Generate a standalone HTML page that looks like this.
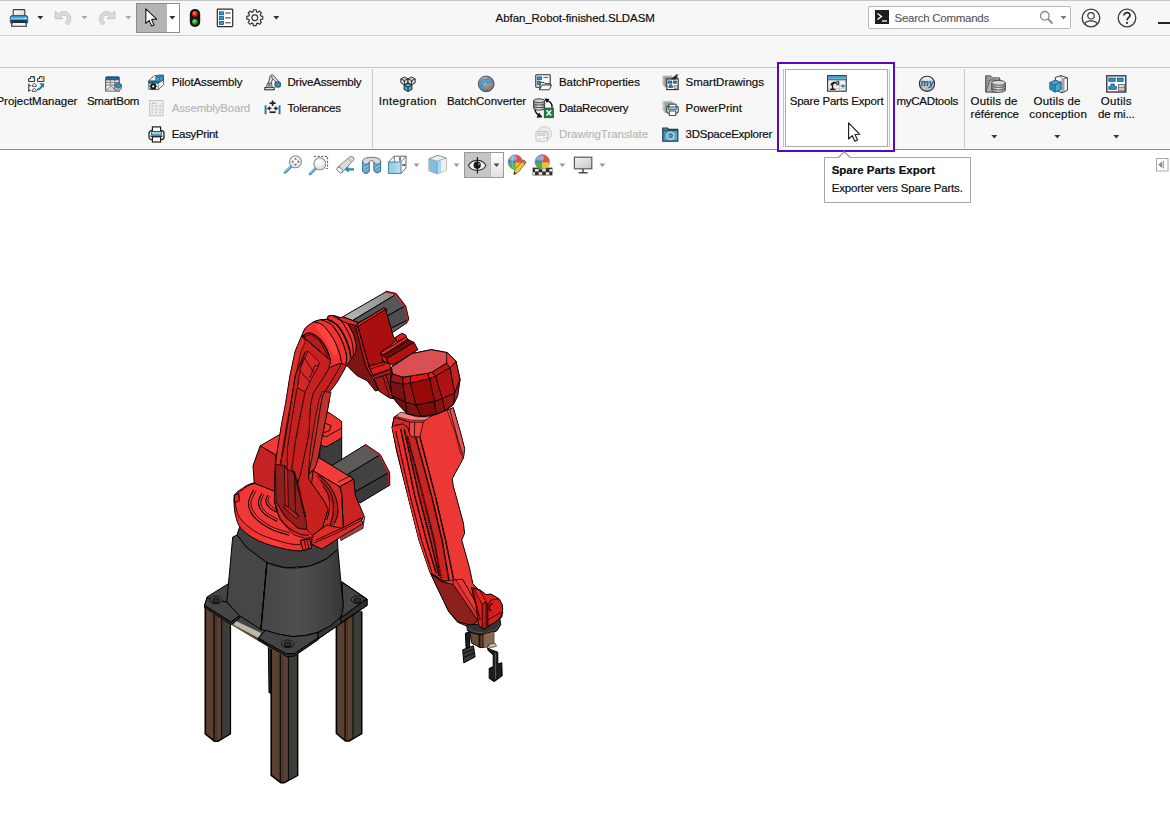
<!DOCTYPE html>
<html><head><meta charset="utf-8"><title>SW</title>
<style>
html,body{margin:0;padding:0;}
body{width:1170px;height:822px;overflow:hidden;background:#fff;font-family:"Liberation Sans",sans-serif;font-size:12px;color:#1a1a1a;position:relative;}
.abs{position:absolute;}
#top{left:0;top:0;width:1170px;height:149px;background:#f7f7f7;}
.hl{position:absolute;left:0;width:1170px;height:1px;}
.t{position:absolute;white-space:nowrap;line-height:14px;height:14px;font-size:11.5px;color:#0c0c0c;-webkit-text-stroke:0.18px #0c0c0c;}

.t.c{text-align:center;}
.vsep{position:absolute;width:1px;background:#c9c9c9;}
svg{position:absolute;overflow:visible;}
</style></head><body>
<div id="top" class="abs"></div>
<div class="hl" style="top:0;background:#c6c6c6;height:1px"></div>
<div class="hl" style="top:35px;background:#cfcfcf"></div>
<div class="hl" style="top:67px;background:#c4c4c4"></div>
<div class="hl" style="top:149px;background:#8c8c8c"></div>

<!--ROBOT--><svg id="robot" width="1170" height="822" viewBox="0 0 1170 822" style="left:0;top:0">
<defs>

<linearGradient id="gped" x1="0" x2="1" y1="0" y2="0"><stop offset="0" stop-color="#464646"/><stop offset="0.45" stop-color="#4f4f4f"/><stop offset="0.85" stop-color="#404040"/><stop offset="1" stop-color="#353535"/></linearGradient>
<linearGradient id="gdisc" x1="0" x2="1" y1="0" y2="0"><stop offset="0" stop-color="#e42a28"/><stop offset="0.45" stop-color="#ff3c3a"/><stop offset="0.6" stop-color="#f43432"/><stop offset="1" stop-color="#e22826"/></linearGradient>
<linearGradient id="gtur" x1="0" x2="1" y1="0" y2="1"><stop offset="0" stop-color="#e02a28"/><stop offset="0.5" stop-color="#fa3a38"/><stop offset="1" stop-color="#d82424"/></linearGradient>
<linearGradient id="gmot" x1="0" x2="1" y1="1" y2="0"><stop offset="0" stop-color="#b8b8b8"/><stop offset="1" stop-color="#8c8c8c"/></linearGradient>
</defs>
<path d="M268.3 643.2 L272.1 643.2 L272.1 693.6 L269.0 692.7 Z" fill="#2e2e2e" stroke="#000" stroke-width="1.0" stroke-linejoin="round" />
<path d="M205.3 604.0 L230.3 604.0 L230.3 733.9 L217.8 741.2 L214.3 741.2 L205.3 733.9 Z" fill="#5a4030" stroke="#000" stroke-width="1.6" stroke-linejoin="round" />
<path d="M221.7 604.0 L229.7 604.0 L229.7 733.6 L221.7 738.4 Z" fill="#3c3c3a" stroke="none" stroke-width="0" stroke-linejoin="round" />
<path d="M215.3 604.0 L216.8 604.0 L216.8 740.4 L215.3 740.4 Z" fill="#48332a" stroke="none" stroke-width="0" stroke-linejoin="round" />
<path d="M214.0 604.0 L214.0 740.0" fill="none" stroke="#0c0806" stroke-width="1.3" stroke-linejoin="round" />
<path d="M221.7 604.0 L221.7 738.4" fill="none" stroke="#0c0c0c" stroke-width="1.125" stroke-linejoin="round" />
<path d="M336.4 612.0 L361.7 612.0 L361.7 733.5 L349.0 741.0 L345.5 741.0 L336.4 733.5 Z" fill="#5a4030" stroke="#000" stroke-width="1.6" stroke-linejoin="round" />
<path d="M353.0 612.0 L361.1 612.0 L361.1 733.2 L353.0 738.1 Z" fill="#3c3c3a" stroke="none" stroke-width="0" stroke-linejoin="round" />
<path d="M346.5 612.0 L348.0 612.0 L348.0 740.2 L346.5 740.2 Z" fill="#48332a" stroke="none" stroke-width="0" stroke-linejoin="round" />
<path d="M345.1 612.0 L345.1 739.8" fill="none" stroke="#0c0806" stroke-width="1.3" stroke-linejoin="round" />
<path d="M353.0 612.0 L353.0 738.1" fill="none" stroke="#0c0c0c" stroke-width="1.125" stroke-linejoin="round" />
<path d="M271.2 648.0 L297.6 648.0 L297.6 775.4 L284.4 782.6 L280.7 782.6 L271.2 775.4 Z" fill="#5a4030" stroke="#000" stroke-width="1.6" stroke-linejoin="round" />
<path d="M288.5 648.0 L297.0 648.0 L297.0 775.1 L288.5 779.9 Z" fill="#3c3c3a" stroke="none" stroke-width="0" stroke-linejoin="round" />
<path d="M281.8 648.0 L283.3 648.0 L283.3 781.8 L281.8 781.8 Z" fill="#48332a" stroke="none" stroke-width="0" stroke-linejoin="round" />
<path d="M280.3 648.0 L280.3 781.4" fill="none" stroke="#0c0806" stroke-width="1.3" stroke-linejoin="round" />
<path d="M288.5 648.0 L288.5 779.9" fill="none" stroke="#0c0c0c" stroke-width="1.125" stroke-linejoin="round" />
<path d="M204.5 606.3 L207.1 596.9 L228.5 583.6 L342.1 581.9 L366.9 599.0 L366.9 605.5 L293.4 655.9 L286.6 656.8 Z" fill="#444444" stroke="#000" stroke-width="1.0" stroke-linejoin="round" />
<path d="M366.9 599.0 L366.9 605.5 L293.4 655.9 L292.6 650.8 Z" fill="#353535" stroke="#000" stroke-width="1.0" stroke-linejoin="round" />
<path d="M204.5 604.6 L204.5 607.5 L287.1 657.3 L288.3 653.3 Z" fill="#6a4a36" stroke="#000" stroke-width="1.0" stroke-linejoin="round" />
<path d="M204.7 607.7 L287.1 657.4" fill="none" stroke="#6a4a36" stroke-width="1.8" stroke-linejoin="round" />
<path d="M235.8 620.5 L261.5 632.8 L258.4 638.3 L233.1 625.1 Z" fill="#bdb9aa" stroke="#333" stroke-width="0.6" stroke-linejoin="round" />
<path d="M207.1 597.8 L226.8 602.1 L239.9 615.4 L231.0 622.1 L204.5 605.5 Z" fill="#454545" stroke="#000" stroke-width="1.0" stroke-linejoin="round" />
<path d="M204.5 605.5 L231.0 622.1 L239.9 615.4 L239.9 617.8 L231.0 624.6 L204.5 607.5 Z" fill="#2f2f2f" stroke="#000" stroke-width="1.0" stroke-linejoin="round" />
<path d="M342.1 582.4 L366.9 599.0 L343.8 615.7 L340.4 617.4 L343.0 605.5 Z" fill="#454545" stroke="#000" stroke-width="1.0" stroke-linejoin="round" />
<path d="M366.9 599.0 L366.9 605.5 L341.3 622.6 L340.4 617.4 L343.8 615.7 Z" fill="#2f2f2f" stroke="#000" stroke-width="1.0" stroke-linejoin="round" />
<ellipse cx="216.0" cy="600.0" rx="6.3" ry="3.8" fill="#555" stroke="#000" stroke-width="0.8"/>
<ellipse cx="216.0" cy="600.5" rx="4" ry="2.4" fill="#2b2b2b" stroke="#000" stroke-width="0.7"/>
<ellipse cx="357.5" cy="599.7" rx="6.3" ry="3.8" fill="#555" stroke="#000" stroke-width="0.8"/>
<ellipse cx="357.5" cy="600.2" rx="4" ry="2.4" fill="#2b2b2b" stroke="#000" stroke-width="0.7"/>
<path d="M237.0 535.0 L246.4 547.4 L266.9 562.7 L285.7 567.9 L309.7 566.2 L326.8 558.5 L337.9 549.1 L337.0 526.8 L309.7 533.7 L299.4 535.4 L266.9 530.3 L241.3 521.7 Z" fill="#3f3f3f" stroke="#000" stroke-width="1.0" stroke-linejoin="round" />
<path d="M232.7 537.1 L237.0 535.0 L246.4 547.4 L266.9 562.7 L260.9 629.4 L239.6 615.7 L226.8 602.1 Z" fill="#474545" stroke="#000" stroke-width="1.0" stroke-linejoin="round" />
<path d="M266.9 562.7 L275.5 565.8 L285.7 567.9 L297.7 567.9 L309.7 566.2 L319.9 562.4 L326.8 558.5 L333.6 553.3 L337.9 549.1 L340.4 576.4 L343.3 605.5 L342.5 612.3 L340.4 617.4 L330.2 626.0 L316.5 632.8 L304.5 635.6 L292.6 636.6 L275.5 633.7 L260.9 629.4 Z" fill="url(#gped)" stroke="#000" stroke-width="1.0" stroke-linejoin="round" />
<path d="M266.9 562.7 L260.9 629.4 Z" fill="none" stroke="#000" stroke-width="1.0" stroke-linejoin="round" />
<path d="M258.4 638.3 L265.2 630.3 L278.9 634.2 L292.6 636.6 L306.2 635.4 L317.4 632.5 L318.2 637.9 L294.6 653.7 L285.7 653.7 Z" fill="#434343" stroke="#000" stroke-width="1.0" stroke-linejoin="round" />
<path d="M258.4 638.3 L285.7 653.7 L294.6 653.7 L318.2 637.9 L318.2 639.7 L294.6 655.9 L286.6 656.8 L258.0 639.7 Z" fill="#2f2f2f" stroke="#000" stroke-width="1.0" stroke-linejoin="round" />
<ellipse cx="287.8" cy="643.9" rx="6.3" ry="3.8" fill="#555" stroke="#000" stroke-width="0.8"/>
<ellipse cx="287.8" cy="644.4" rx="4" ry="2.4" fill="#2b2b2b" stroke="#000" stroke-width="0.7"/>
<path d="M319.7 443.6 L341.7 436.8 L341.7 459.0 L334.2 468.0 L319.7 459.8 Z" fill="#3c3c3c" stroke="#000" stroke-width="1.0" stroke-linejoin="round" />
<path d="M315.7 410.3 L329.4 412.8 L341.7 421.4 L341.7 437.9 L326.0 447.0 L319.7 444.8 L312.3 434.2 Z" fill="#f23634" stroke="#000" stroke-width="1.0" stroke-linejoin="round" />
<path d="M319.7 444.8 L320.5 434.2 L326.0 436.8 L341.7 428.2" fill="none" stroke="#000" stroke-width="0.875" stroke-linejoin="round" />
<path d="M322.6 422.2 L331.1 425.6 L329.4 430.8 L324.3 432.5 L322.6 427.4" fill="none" stroke="#000" stroke-width="0.875" stroke-linejoin="round" />
<path d="M329.4 467.0 L365.3 444.8 L379.8 455.0 L344.8 476.1 Z" fill="#5d5b58" stroke="#000" stroke-width="1.0" stroke-linejoin="round" />
<path d="M344.8 476.1 L379.8 455.0 L388.9 472.6 L354.2 492.3 Z" fill="#424242" stroke="#000" stroke-width="1.0" stroke-linejoin="round" />
<path d="M354.2 492.3 L388.9 472.6 L389.2 485.5 L360.2 502.9 L354.2 500.9 Z" fill="#3a3a3a" stroke="#000" stroke-width="1.0" stroke-linejoin="round" />
<path d="M365.3 444.8 L379.8 455.0 L388.9 472.6 L389.2 485.5" fill="none" stroke="#e02020" stroke-width="1.6" stroke-linejoin="round" />
<path d="M365.0 444.1 L380.3 454.4 L389.7 472.6 L389.9 485.8" fill="none" stroke="#000" stroke-width="0.75" stroke-linejoin="round" />
<path d="M234.8 495.0 C236.0 492.5 238.2 491.1 241.3 489.1 C244.4 487.1 247.0 484.5 253.2 483.1 C259.5 481.7 269.5 478.7 278.9 480.5 C288.3 482.4 302.8 488.2 309.7 494.2 C316.5 500.2 318.8 508.7 319.9 516.4 C321.1 524.1 318.2 535.4 316.5 540.3 C314.8 545.3 312.2 544.6 309.7 546.3 C307.1 548.1 305.7 550.6 301.1 550.9 C296.6 551.3 289.4 550.1 282.3 548.4 C275.2 546.7 265.2 544.0 258.4 540.7 C251.5 537.4 245.0 532.8 241.3 528.7 C237.5 524.7 237.0 520.5 235.8 516.4 C234.6 512.4 234.3 508.0 234.1 504.4 C233.9 500.9 233.6 497.6 234.8 495.0 Z" fill="url(#gdisc)" stroke="#000" stroke-width="1.0" stroke-linejoin="round"/>
<path d="M235.8 496.8 C236.8 494.4 238.4 492.9 241.3 490.8 C244.2 488.6 247.0 485.5 253.2 483.9 C259.5 482.4 269.8 479.7 278.9 481.4 C288.0 483.1 301.5 488.3 307.9 494.2 C314.4 500.0 316.5 509.6 317.4 516.4 C318.2 523.2 316.1 530.5 313.1 535.2 C310.1 539.9 305.7 543.6 299.4 544.4 C293.1 545.2 282.9 542.2 275.5 540.0 C268.1 537.8 260.9 535.2 255.0 531.5 C249.0 527.7 243.2 522.2 239.9 517.8 C236.7 513.3 236.2 508.3 235.5 504.8 C234.8 501.3 234.8 499.1 235.8 496.8 Z" fill="#f23836" stroke="#000" stroke-width="0.8" stroke-linejoin="round"/>
<path d="M234.1 495.0 L238.7 493.8 L239.6 500.7 L234.8 502.4 Z" fill="#e22826" stroke="#000" stroke-width="1.0" stroke-linejoin="round" />
<path d="M253.6 489.9 C252.7 492.1 248.5 498.3 248.5 502.7 C248.5 507.2 249.9 512.1 253.6 516.4 C257.2 520.7 264.4 525.6 270.3 528.7 C276.3 531.9 286.0 534.1 289.1 535.2" fill="none" stroke="#000" stroke-width="1.125" stroke-linejoin="round"/>
<path d="M256.0 490.8 C255.2 492.8 251.0 498.7 251.0 502.7 C251.0 506.8 252.5 511.1 256.0 515.0 C259.4 519.0 266.0 523.7 271.7 526.7 C277.4 529.6 287.0 531.8 290.0 532.8" fill="none" stroke="#000" stroke-width="0.75" stroke-linejoin="round"/>
<path d="M261.8 493.3 C261.2 495.0 258.0 499.7 258.4 503.1 C258.7 506.4 260.7 510.3 263.8 513.3 C267.0 516.4 275.0 520.2 277.2 521.5" fill="none" stroke="#000" stroke-width="1.125" stroke-linejoin="round"/>
<path d="M264.0 494.2 C263.5 495.7 260.5 500.1 260.8 503.1 C261.1 506.0 263.0 509.2 265.9 512.0 C268.8 514.7 276.2 518.2 278.2 519.5" fill="none" stroke="#000" stroke-width="0.75" stroke-linejoin="round"/>
<path d="M267.8 495.0 C267.4 496.1 265.4 499.2 265.7 501.4 C266.1 503.6 268.2 506.4 270.0 508.2 C271.8 510.0 275.3 511.5 276.3 512.1" fill="none" stroke="#000" stroke-width="1.125" stroke-linejoin="round"/>
<path d="M269.7 495.9 C269.4 496.8 267.6 499.3 267.9 501.0 C268.3 502.8 270.2 505.0 271.7 506.5 C273.2 508.0 276.0 509.3 276.8 509.9" fill="none" stroke="#000" stroke-width="0.75" stroke-linejoin="round"/>
<path d="M260.2 445.8 L279.5 434.7 L280.2 453.0 L275.6 455.0 Z" fill="#f03a38" stroke="#000" stroke-width="1.0" stroke-linejoin="round" />
<path d="M260.2 445.8 L275.6 455.0 L275.0 491.5 L254.2 483.2 L253.0 465.8 Z" fill="#c52222" stroke="#000" stroke-width="1.0" stroke-linejoin="round" />
<path d="M305.5 465.0 L318.3 457.3 L339.7 486.8 L329.4 538.8 L305.5 519.7 Z" fill="#d82a28" stroke="none" stroke-width="0" stroke-linejoin="round" />
<path d="M318.3 457.3 L353.7 479.0 L339.7 486.8 L313.2 470.9 Z" fill="#f43c3a" stroke="#000" stroke-width="1.0" stroke-linejoin="round" />
<path d="M339.7 486.8 L353.7 479.0 L355.4 495.7 L363.9 515.4 L362.2 519.7 L343.4 532.0 L341.7 494.0 Z" fill="#c92323" stroke="#000" stroke-width="1.0" stroke-linejoin="round" />
<path d="M313.2 470.9 L339.7 486.8 L341.7 494.0 L343.4 532.0 L329.4 538.8 L315.7 535.0 L308.9 502.6 Z" fill="#d82a28" stroke="#000" stroke-width="1.0" stroke-linejoin="round" />
<path d="M337.9 482.1 L351.6 475.2" fill="none" stroke="#000" stroke-width="0.75" stroke-linejoin="round" />
<path d="M315.7 475.2 C316.3 474.4 322.8 476.9 326.0 480.3 C329.2 483.8 332.9 490.3 334.9 495.7 C336.9 501.1 338.1 508.0 337.9 512.8 C337.8 517.7 335.9 521.9 334.2 524.8 C332.5 527.6 328.1 531.9 327.7 529.9 C327.3 527.9 331.7 518.2 332.0 512.8 C332.3 507.4 331.0 502.0 329.4 497.4 C327.8 492.9 324.8 489.2 322.6 485.5 C320.3 481.8 315.2 476.1 315.7 475.2 Z" fill="#b81c1a" stroke="none" stroke-width="0" stroke-linejoin="round"/>
<path d="M318.3 475.2 C320.1 476.9 326.4 481.5 329.4 485.5 C332.4 489.5 334.8 494.6 336.2 499.1 C337.7 503.7 338.2 508.8 337.9 512.8 C337.7 516.8 335.1 521.4 334.5 523.1" fill="none" stroke="#000" stroke-width="1.0" stroke-linejoin="round"/>
<path d="M320.9 480.3 C322.3 482.1 327.4 486.9 329.4 490.6 C331.5 494.3 332.6 498.3 333.2 502.6 C333.7 506.8 333.4 512.3 332.8 516.2 C332.2 520.2 330.0 524.8 329.4 526.5" fill="none" stroke="#000" stroke-width="1.0" stroke-linejoin="round"/>
<path d="M322.6 485.5 C323.6 487.2 327.4 491.7 328.5 495.7 C329.7 499.7 329.7 505.4 329.4 509.4 C329.1 513.4 327.3 517.9 326.8 519.7" fill="none" stroke="#000" stroke-width="1.0" stroke-linejoin="round"/>
<path d="M312.2 535.2 L326.8 525.0 L342.1 528.4 L360.9 518.1 L363.0 523.6 L340.4 537.3 L321.6 549.2 L311.7 544.1 Z" fill="#e42a28" stroke="#000" stroke-width="1.0" stroke-linejoin="round" />
<path d="M315.6 540.3 L334.4 531.5 L342.1 528.4" fill="none" stroke="#000" stroke-width="0.875" stroke-linejoin="round" />
<path d="M313.9 542.9 L335.3 533.8 L361.8 520.2" fill="none" stroke="#000" stroke-width="0.75" stroke-linejoin="round" />
<path d="M340.4 537.3 L363.0 523.6 L364.7 516.4 L363.0 528.4 L340.8 540.7 Z" fill="#9a4444" stroke="#000" stroke-width="0.6" stroke-linejoin="round" />
<path d="M300.3 540.3 L309.7 539.0 L311.7 548.0 L303.2 550.6 Z" fill="#e22826" stroke="#000" stroke-width="1.0" stroke-linejoin="round" />
<path d="M304.2 540.0 L306.2 549.2" fill="none" stroke="#000" stroke-width="0.75" stroke-linejoin="round" />
<path d="M306.9 539.7 L309.0 548.9" fill="none" stroke="#000" stroke-width="0.75" stroke-linejoin="round" />
<path d="M301.7 335.9 L295.2 351.3 L290.1 375.2 L285.8 402.6 L281.5 424.8 L277.3 451.3 L275.6 465.0 L274.7 480.3 L274.4 500.9 L277.3 512.8 L283.2 523.1 L293.5 532.5 L303.8 537.6 L313.2 535.0 L322.6 527.4 L328.0 509.4 L325.1 502.6 L315.7 488.9 L308.9 479.5 L308.5 474.4 L314.9 468.4 L318.3 457.3 L322.6 434.2 L326.8 413.7 L329.4 400.0 L328.2 394.0 L337.4 381.8 L345.6 367.4 L346.7 365.4 L351.8 358.2 L355.4 353.1 L356.4 345.9 L353.8 334.6 L347.7 323.3 L341.5 318.2 L333.3 315.6 L328.2 316.2 L327.2 319.2 L321.0 319.7 L313.8 321.8 L305.6 327.9 Z" fill="#c6211f" stroke="#000" stroke-width="1.0" stroke-linejoin="round" />
<path d="M329.4 400.0 L326.8 413.7 L322.6 434.2 L318.3 457.3 L314.9 468.4 L308.5 473.8 L309.6 456.4 L312.6 434.2 L316.2 413.7 L319.1 400.0 L322.2 391.5 L331.1 392.3 Z" fill="#c2302e" stroke="#000" stroke-width="0.7" stroke-linejoin="round" />
<path d="M301.7 335.9 L295.2 351.3 L290.1 375.2 L285.8 402.6 L281.5 424.8 L277.3 451.3 L275.6 465.0 L274.7 480.3 L274.4 500.9 L277.3 512.8 L281.0 508.0 L279.5 480.0 L282.0 452.0 L286.5 425.0 L291.0 402.0 L295.5 376.0 L300.5 353.0 L305.5 341.0 Z" fill="#e0302e" stroke="#000" stroke-width="0.6" stroke-linejoin="round" />
<path d="M274.1 500.0 L276.0 501.3 L285.0 516.6 L297.8 528.1 L306.7 529.4 L313.7 536.8 L305.4 538.6 L293.9 534.8 L279.9 519.4 Z" fill="#d22826" stroke="#000" stroke-width="0.7" stroke-linejoin="round" />
<path d="M275.4 464.3 L284.3 465.5 L287.5 470.0 L294.6 471.9 L296.5 482.1 L306.1 521.7 L307.0 529.4 L297.8 528.1 L285.0 516.6 L276.0 501.3 Z" fill="#8e1f1c" stroke="#000" stroke-width="0.8" stroke-linejoin="round" />
<path d="M284.3 465.5 L287.5 470.0 L288.4 507.0 L285.2 505.4 Z" fill="#c4201e" stroke="#000" stroke-width="0.7" stroke-linejoin="round" />
<path d="M288.4 507.0 L285.2 505.4 L283.5 507.0 L296.2 518.9 L299.0 516.4 Z" fill="#b81e1c" stroke="#000" stroke-width="0.7" stroke-linejoin="round" />
<path d="M294.6 471.9 L295.5 511.5 L299.0 516.4" fill="none" stroke="#000" stroke-width="0.875" stroke-linejoin="round" />
<path d="M305.1 352.1 L295.2 375.2 L288.4 419.7 L283.2 451.3 L280.2 463.6" fill="none" stroke="#000" stroke-width="0.875" stroke-linejoin="round" />
<path d="M319.5 362.8 L306.3 385.5 L299.5 419.7 L295.2 442.7 L291.8 468.4 L297.8 482.1 L302.1 502.6 L305.8 517.1" fill="none" stroke="#000" stroke-width="1.4" stroke-linejoin="round" stroke-dasharray="1.2 0.7"/>
<path d="M310.8 379.7 L296.9 388.9 L291.8 419.7 L287.5 447.9 L287.0 470.1" fill="none" stroke="#000" stroke-width="0.75" stroke-linejoin="round" />
<path d="M329.2 367.4 L324.1 376.7 L313.2 393.2 L310.6 404.3 L308.9 434.2 L300.3 475.2 L297.8 482.1" fill="none" stroke="#000" stroke-width="0.875" stroke-linejoin="round" />
<path d="M341.5 363.3 L337.4 371.5 L322.6 395.7 L320.0 409.4 L318.3 420.5 L312.3 456.4 L308.9 471.8 L308.5 476.9" fill="none" stroke="#000" stroke-width="0.875" stroke-linejoin="round" />
<path d="M275.0 502.6 C275.7 504.8 276.8 512.1 279.0 516.2 C281.2 520.4 284.8 524.4 288.4 527.4 C291.9 530.3 296.9 532.9 300.3 534.2 C303.8 535.5 307.5 534.9 308.9 535.0" fill="none" stroke="#000" stroke-width="0.875" stroke-linejoin="round"/>
<path d="M302.1 336.2 C301.7 335.3 303.7 330.3 305.6 327.9 C307.6 325.6 311.3 323.2 313.8 321.8 C316.4 320.4 318.8 320.2 321.0 319.7 C323.2 319.3 326.0 319.8 327.2 319.2 C328.4 318.6 327.2 316.8 328.2 316.2 C329.2 315.6 331.1 315.3 333.3 315.6 C335.6 316.0 339.1 316.9 341.5 318.2 C343.9 319.5 345.6 320.6 347.7 323.3 C349.7 326.1 352.4 330.9 353.8 334.6 C355.3 338.4 356.2 342.8 356.4 345.9 C356.7 349.0 356.2 351.0 355.4 353.1 C354.6 355.1 353.2 356.2 351.8 358.2 C350.3 360.3 348.4 364.5 346.7 365.4 C345.0 366.2 343.8 363.2 341.5 363.3 C339.3 363.4 335.4 365.2 333.3 365.9 C331.3 366.6 329.7 368.2 329.2 367.4 C328.7 366.7 330.4 363.7 330.3 361.3 C330.1 358.9 329.4 356.0 328.2 353.1 C327.0 350.2 325.3 346.8 323.1 343.8 C320.9 340.9 317.4 337.4 314.9 335.6 C312.3 333.8 309.8 333.0 307.7 333.1 C305.6 333.2 302.4 337.0 302.1 336.2 Z" fill="#f03230" stroke="#000" stroke-width="1.0" stroke-linejoin="round"/>
<path d="M315.9 326.4 C315.6 324.0 320.5 323.8 323.1 325.4 C325.6 326.9 329.1 331.7 331.3 335.6 C333.5 339.6 335.5 345.6 336.4 349.0 C337.3 352.4 337.5 355.8 336.6 356.2 C335.8 356.5 333.2 353.8 331.3 351.0 C329.4 348.3 327.7 343.8 325.1 339.7 C322.6 335.6 316.2 328.8 315.9 326.4 Z" fill="#fb4644" stroke="none" stroke-width="0" stroke-linejoin="round"/>
<path d="M313.8 321.8 C315.4 322.4 319.8 322.6 323.1 325.4 C326.3 328.2 330.6 334.1 333.3 338.7 C336.1 343.3 338.1 349.0 339.5 353.1 C340.9 357.2 341.2 361.6 341.5 363.3" fill="none" stroke="#000" stroke-width="1.0" stroke-linejoin="round"/>
<path d="M321.0 319.7 C322.7 320.5 328.0 321.4 331.3 324.4 C334.5 327.4 338.1 333.2 340.5 337.7 C342.9 342.1 344.6 347.4 345.6 351.0 C346.7 354.6 346.7 357.0 346.7 359.2 C346.7 361.5 345.8 363.5 345.6 364.4" fill="none" stroke="#000" stroke-width="1.125" stroke-linejoin="round"/>
<path d="M327.2 319.2 C328.9 320.3 334.4 322.1 337.4 325.4 C340.5 328.6 343.6 334.4 345.6 338.7 C347.7 343.0 348.9 347.8 349.7 351.0 C350.6 354.3 350.6 357.0 350.8 358.2" fill="none" stroke="#000" stroke-width="1.6" stroke-linejoin="round"/>
<path d="M333.3 316.2 C334.7 317.0 338.8 318.0 341.5 321.3 C344.3 324.5 347.9 331.5 349.7 335.6 C351.6 339.7 352.2 342.6 352.8 345.9 C353.4 349.1 353.2 353.6 353.3 355.1" fill="none" stroke="#000" stroke-width="1.0" stroke-linejoin="round"/>
<path d="M303.4 336.9 L310.8 334.4 L319.5 340.8 L325.6 351.0 L328.4 359.2 L326.2 356.7 Z" fill="#b51c1a" stroke="#000" stroke-width="0.7" stroke-linejoin="round" />
<path d="M302.1 336.9 C303.3 336.2 306.8 332.5 309.7 332.8 C312.6 333.0 316.7 335.5 319.5 338.2 C322.3 340.9 324.8 345.3 326.7 349.0 C328.5 352.6 329.8 358.4 330.5 360.3" fill="none" stroke="#000" stroke-width="0.875" stroke-linejoin="round"/>
<path d="M303.4 337.2 L326.2 356.7" fill="none" stroke="#000" stroke-width="1.0" stroke-linejoin="round" />
<path d="M305.1 352.1 L308.2 351.3 L319.5 362.3 L318.2 366.2 L310.8 379.7 L305.1 392.1 L297.4 387.9 L300.5 367.4 Z" fill="#d42826" stroke="#000" stroke-width="0.7" stroke-linejoin="round" />
<path d="M308.2 351.3 L304.6 358.2 L300.5 367.4" fill="none" stroke="#000" stroke-width="0.75" stroke-linejoin="round" />
<path d="M304.6 358.2 L313.8 372.6" fill="none" stroke="#000" stroke-width="0.75" stroke-linejoin="round" />
<path d="M299.5 370.5 L309.7 381.8" fill="none" stroke="#000" stroke-width="0.75" stroke-linejoin="round" />
<path d="M318.2 366.2 L314.9 365.4 L309.7 377.7" fill="none" stroke="#000" stroke-width="1.2" stroke-linejoin="round" stroke-dasharray="1.2 0.7"/>
<path d="M342.8 316.8 L386.0 291.7 L395.8 294.0 L393.2 296.1 L352.6 320.5 Z" fill="url(#gmot)" stroke="#000" stroke-width="1.0" stroke-linejoin="round" />
<path d="M352.6 320.5 L393.2 296.1 L395.8 294.0 L405.2 306.4 L402.6 307.4 L386.4 316.5 L381.3 310.6 L358.2 322.6 Z" fill="#575757" stroke="#000" stroke-width="1.0" stroke-linejoin="round" />
<path d="M386.4 316.5 L402.6 307.4 L405.2 306.4 L408.2 319.2 L406.5 320.5 L389.0 329.4 Z" fill="#4d4d4d" stroke="#000" stroke-width="1.0" stroke-linejoin="round" />
<path d="M389.0 329.4 L406.5 320.5 L408.2 319.2 L405.2 323.9 L393.7 331.8 L389.8 333.7 Z" fill="#5e5e5e" stroke="#000" stroke-width="1.0" stroke-linejoin="round" />
<path d="M386.0 291.7 L395.8 294.0 L405.2 306.4 L408.2 319.2 L405.4 323.9" fill="none" stroke="#e02020" stroke-width="1.8" stroke-linejoin="round" />
<path d="M385.6 291.2 L396.2 293.5 L405.8 306.1 L408.8 319.2 L405.7 324.3" fill="none" stroke="#000" stroke-width="0.75" stroke-linejoin="round" />
<path d="M341.5 318.2 L345.6 321.3 L358.5 323.8 L369.2 370.5 L372.3 376.7 L378.5 390.0 L375.4 391.0 L367.2 380.8 L356.9 375.6 L346.7 365.4 L351.8 358.2 L355.4 353.1 L356.4 345.9 L353.8 334.6 L347.7 323.3 Z" fill="#7e1515" stroke="#000" stroke-width="1.0" stroke-linejoin="round" />
<path d="M337.7 318.8 L342.8 316.8 L352.6 320.5 L358.2 322.6 L357.2 324.1 L356.5 325.9 L345.4 322.6 Z" fill="#e22a28" stroke="#000" stroke-width="1.0" stroke-linejoin="round" />
<path d="M356.5 325.9 L358.6 327.1 L387.1 310.0 L385.6 308.2 L383.7 307.9 L357.2 323.9 Z" fill="#ee1e1c" stroke="#000" stroke-width="1.0" stroke-linejoin="round" />
<path d="M357.8 326.5 L385.6 309.4 L393.7 337.3 L397.9 340.2 L380.9 352.1 L383.4 362.1 L368.9 366.3 Z" fill="#aa0f0f" stroke="#000" stroke-width="1.0" stroke-linejoin="round" />
<path d="M355.2 325.8 L357.8 326.5 L368.9 366.3 L373.2 375.7 L370.6 375.7 L365.5 365.5 Z" fill="#cc1414" stroke="#000" stroke-width="1.0" stroke-linejoin="round" />
<path d="M368.9 366.3 L383.4 362.1 L389.4 363.8 L391.1 368.9 L375.7 374.0 L373.2 375.7 Z" fill="#e01a18" stroke="#000" stroke-width="1.0" stroke-linejoin="round" />
<path d="M370.6 368.9 L385.1 364.1" fill="none" stroke="#000" stroke-width="0.75" stroke-linejoin="round" />
<path d="M394.6 337.9 L401.8 333.3 L405.6 334.9 L406.7 337.4 L397.4 341.5 Z" fill="#e81a18" stroke="#000" stroke-width="1.0" stroke-linejoin="round" />
<path d="M380.4 352.5 L406.1 337.1 L408.1 339.3 L382.6 355.4 Z" fill="#f21a18" stroke="#000" stroke-width="1.0" stroke-linejoin="round" />
<path d="M382.6 355.4 L408.1 339.3 L414.0 342.3 L386.4 358.7 Z" fill="#4a0606" stroke="#000" stroke-width="0.6" stroke-linejoin="round" />
<path d="M384.0 356.1 L386.4 358.0" fill="none" stroke="#d01412" stroke-width="0.875" stroke-linejoin="round" />
<path d="M385.9 354.9 L388.3 356.9" fill="none" stroke="#d01412" stroke-width="0.875" stroke-linejoin="round" />
<path d="M387.9 353.7 L390.3 355.7" fill="none" stroke="#d01412" stroke-width="0.875" stroke-linejoin="round" />
<path d="M389.8 352.6 L392.2 354.6" fill="none" stroke="#d01412" stroke-width="0.875" stroke-linejoin="round" />
<path d="M391.7 351.4 L394.1 353.4" fill="none" stroke="#d01412" stroke-width="0.875" stroke-linejoin="round" />
<path d="M393.6 350.3 L396.0 352.2" fill="none" stroke="#d01412" stroke-width="0.875" stroke-linejoin="round" />
<path d="M395.5 349.1 L397.9 351.1" fill="none" stroke="#d01412" stroke-width="0.875" stroke-linejoin="round" />
<path d="M397.4 347.9 L399.8 349.9" fill="none" stroke="#d01412" stroke-width="0.875" stroke-linejoin="round" />
<path d="M399.4 346.8 L401.8 348.8" fill="none" stroke="#d01412" stroke-width="0.875" stroke-linejoin="round" />
<path d="M401.3 345.6 L403.7 347.6" fill="none" stroke="#d01412" stroke-width="0.875" stroke-linejoin="round" />
<path d="M403.2 344.5 L405.6 346.4" fill="none" stroke="#d01412" stroke-width="0.875" stroke-linejoin="round" />
<path d="M405.1 343.3 L407.5 345.3" fill="none" stroke="#d01412" stroke-width="0.875" stroke-linejoin="round" />
<path d="M407.0 342.1 L409.4 344.1" fill="none" stroke="#d01412" stroke-width="0.875" stroke-linejoin="round" />
<path d="M408.9 341.0 L411.3 342.9" fill="none" stroke="#d01412" stroke-width="0.875" stroke-linejoin="round" />
<path d="M386.4 358.7 L414.0 342.3 L417.9 349.7 L392.5 365.3 L388.1 362.9 Z" fill="#b41010" stroke="#000" stroke-width="1.0" stroke-linejoin="round" />
<path d="M380.4 352.5 L382.6 355.4 L386.4 358.7 L388.1 362.9 L383.1 360.9 Z" fill="#e01a18" stroke="#000" stroke-width="1.0" stroke-linejoin="round" />
<path d="M373.2 375.7 L391.1 368.9 L392.8 382.6 L399.7 399.7 L389.4 397.9 L379.1 391.1 Z" fill="#a41a18" stroke="#000" stroke-width="1.0" stroke-linejoin="round" />
<path d="M375.7 378.3 L389.4 373.7" fill="none" stroke="#000" stroke-width="0.75" stroke-linejoin="round" />
<path d="M382.6 375.7 L389.4 396.2" fill="none" stroke="#000" stroke-width="0.75" stroke-linejoin="round" />
<path d="M386.0 374.9 L392.0 394.5" fill="none" stroke="#000" stroke-width="0.75" stroke-linejoin="round" />
<path d="M401.0 412.8 L394.2 417.1 L392.1 427.4 L396.8 451.3 L407.9 495.7 L419.0 540.0 L430.1 572.5 L435.2 582.7 L448.9 611.8 L457.4 622.1 L469.4 627.2 L479.7 628.9 L495.0 623.8 L501.9 616.9 L502.7 608.4 L500.2 600.7 L491.6 594.7 L483.1 594.7 L472.8 583.6 L469.4 567.4 L461.7 540.0 L464.6 533.3 L463.4 523.1 L453.2 485.5 L452.3 478.6 L463.4 458.1 L464.6 448.7 L460.9 434.2 L453.2 407.7 L428.4 417.1 Z" fill="#ec3834" stroke="#000" stroke-width="1.0" stroke-linejoin="round" />
<path d="M394.2 417.1 L392.1 427.4 L396.8 451.3 L407.9 495.7 L419.0 540.0 L430.1 572.5 L443.8 581.0 L453.2 580.2 L445.5 540.0 L435.2 495.7 L419.8 436.8 L411.3 435.9 L409.6 422.2 Z" fill="#d62a28" stroke="#000" stroke-width="1.0" stroke-linejoin="round" />
<path d="M392.1 427.4 L407.9 495.7 L419.0 540.0 L430.1 572.5 L436.1 573.3 L426.3 540.0 L414.7 495.7 L400.7 429.1 Z" fill="#f62c2c" stroke="none" stroke-width="0" stroke-linejoin="round" />
<path d="M400.7 429.1 L414.7 495.7 L426.3 540.0 L436.1 573.3 L439.0 575.9 L430.4 540.0 L419.0 495.7 L404.1 429.1 Z" fill="#ee2a28" stroke="none" stroke-width="0" stroke-linejoin="round" />
<path d="M404.1 429.1 L419.0 495.7 L430.4 540.0 L439.0 575.9 L442.1 578.5 L435.2 540.0 L424.1 495.7 L408.7 436.8 Z" fill="#c22220" stroke="none" stroke-width="0" stroke-linejoin="round" />
<path d="M408.7 436.8 L424.1 495.7 L435.2 540.0 L442.1 578.5 L448.9 580.2 L442.1 540.0 L431.5 495.7 L415.6 436.8 Z" fill="#ca2422" stroke="none" stroke-width="0" stroke-linejoin="round" />
<path d="M415.6 436.8 L431.5 495.7 L442.1 540.0 L448.9 580.2 L453.7 580.2 L445.5 540.0 L435.2 495.7 L419.8 436.8 Z" fill="#f83030" stroke="none" stroke-width="0" stroke-linejoin="round" />
<path d="M395.6 430.8 L410.1 495.7 L421.5 540.0 L431.8 572.1" fill="none" stroke="#000" stroke-width="1.0" stroke-linejoin="round" />
<path d="M400.7 429.1 L414.7 495.7 L426.3 540.0 L436.1 573.3" fill="none" stroke="#000" stroke-width="1.375" stroke-linejoin="round" />
<path d="M404.1 429.1 L419.0 495.7 L430.4 540.0 L439.0 575.9" fill="none" stroke="#000" stroke-width="1.375" stroke-linejoin="round" />
<path d="M415.6 436.8 L431.5 495.7 L442.1 540.0 L448.9 580.2" fill="none" stroke="#000" stroke-width="1.375" stroke-linejoin="round" />
<path d="M419.8 436.8 L435.2 495.7 L445.5 540.0 L453.7 580.2" fill="none" stroke="#000" stroke-width="1.375" stroke-linejoin="round" />
<path d="M407.5 436.8 L422.9 495.7 L434.0 540.0 L441.0 577.9" fill="none" stroke="#000" stroke-width="1.9" stroke-linejoin="round" stroke-dasharray="1.3 0.7"/>
<path d="M409.6 422.2 L423.2 422.2 L419.8 436.8 L411.3 436.8 L409.2 432.5 Z" fill="#f04442" stroke="#000" stroke-width="0.7" stroke-linejoin="round" />
<path d="M414.7 422.2 L414.4 436.8" fill="none" stroke="#000" stroke-width="0.75" stroke-linejoin="round" />
<path d="M394.2 425.6 L402.7 423.9 L407.9 427.4 L409.2 432.5" fill="none" stroke="#000" stroke-width="0.875" stroke-linejoin="round" />
<path d="M423.2 422.2 L428.4 417.1" fill="none" stroke="#000" stroke-width="0.875" stroke-linejoin="round" />
<path d="M453.2 407.7 L460.9 434.2 L464.6 448.7 L463.4 458.1 L460.0 451.3 L455.7 434.2 L447.2 410.3 Z" fill="#e85250" stroke="#000" stroke-width="0.6" stroke-linejoin="round" />
<path d="M449.7 409.4 L458.8 442.7 L462.6 454.7" fill="none" stroke="#000" stroke-width="0.75" stroke-linejoin="round" />
<path d="M396.8 415.0 L401.0 412.0 L416.4 416.8 L428.4 416.8 L431.8 413.7 L428.4 418.5 L425.0 420.2 L411.3 420.2 L399.3 417.4 Z" fill="#f48686" stroke="#000" stroke-width="0.6" stroke-linejoin="round" />
<path d="M430.9 574.2 L445.5 582.7 L453.2 584.4 L477.9 620.3 L472.0 625.5 L459.1 622.1 L448.9 611.8 L435.2 583.6 Z" fill="#8e201c" stroke="#000" stroke-width="1.0" stroke-linejoin="round" />
<path d="M453.2 580.2 L455.7 579.7 L480.5 619.5 L477.9 620.3 L453.2 584.4 Z" fill="#e23230" stroke="#000" stroke-width="0.6" stroke-linejoin="round" />
<path d="M455.7 579.7 L462.6 579.3 L483.1 615.2" fill="none" stroke="#000" stroke-width="0.875" stroke-linejoin="round" />
<path d="M430.9 574.2 L435.2 576.8 L440.3 581.0 L445.5 582.7" fill="none" stroke="#000" stroke-width="0.875" stroke-linejoin="round" />
<path d="M466.8 624.8 L480.1 624.1 L499.9 618.8 L500.7 624.8 L496.9 630.8 L485.5 635.4 L473.4 633.8 L467.4 630.6 Z" fill="#333333" stroke="#000" stroke-width="1.0" stroke-linejoin="round" />
<path d="M471.4 587.4 L480.1 590.0 L486.2 594.7 L490.8 594.0 L498.9 598.7 L502.2 604.7 L502.6 612.8 L498.9 619.1 L493.5 623.1 L487.9 626.6 L483.5 629.2 L478.8 625.5 L476.1 606.8 Z" fill="#dc201e" stroke="#000" stroke-width="1.0" stroke-linejoin="round" />
<path d="M474.1 588.0 L480.1 590.7 L486.2 602.1 L482.1 604.1 L476.4 594.0 Z" fill="#e82422" stroke="#000" stroke-width="0.7" stroke-linejoin="round" />
<path d="M482.1 604.1 L486.2 602.1 L487.9 604.7 L487.6 626.3 L483.5 629.1 L482.4 626.8 Z" fill="#c41816" stroke="#000" stroke-width="0.8" stroke-linejoin="round" />
<path d="M486.2 602.1 L486.2 626.2" fill="none" stroke="#000" stroke-width="0.75" stroke-linejoin="round" />
<path d="M487.9 604.7 L490.8 600.1 L498.9 598.7 L502.2 604.7 L502.6 612.8 L498.9 619.1 L493.5 623.1 L487.9 626.3 Z" fill="#d81e1c" stroke="#000" stroke-width="0.7" stroke-linejoin="round" />
<path d="M487.9 620.1 L498.9 613.4 L502.6 612.1" fill="none" stroke="#000" stroke-width="0.75" stroke-linejoin="round" />
<path d="M492.4 603.4 C492.0 603.7 490.3 604.5 489.8 605.4 C489.2 606.3 489.0 607.8 489.2 608.8 C489.5 609.7 490.8 610.7 491.1 611.0" fill="none" stroke="#000" stroke-width="1.125" stroke-linejoin="round"/>
<path d="M472.8 589.4 L480.1 620.1" fill="none" stroke="#000" stroke-width="1.5" stroke-linejoin="round" stroke-dasharray="1.2 0.8"/>
<path d="M391.4 367.2 L412.2 353.5 L431.3 349.7 L446.7 352.5 L448.0 353.5 L456.0 361.2 L460.0 379.3 L457.6 395.7 L453.2 405.0 L445.0 410.5 L436.3 414.1 L421.5 416.5 L407.2 413.8 L397.4 403.4 L391.9 395.7 L390.3 381.5 Z" fill="#9c0a0a" stroke="#000" stroke-width="1.0" stroke-linejoin="round" />
<path d="M392.5 373.8 L402.9 377.1 L402.9 384.2 L390.3 381.5 Z" fill="#a81414" stroke="#000" stroke-width="0.8" stroke-linejoin="round" />
<path d="M402.9 377.1 L410.5 376.0 L410.3 383.1 L402.9 384.2 Z" fill="#c41818" stroke="#000" stroke-width="0.8" stroke-linejoin="round" />
<path d="M410.5 376.0 L427.5 373.3 L429.7 378.7 L410.3 383.1 Z" fill="#e81212" stroke="#000" stroke-width="0.8" stroke-linejoin="round" />
<path d="M427.5 373.3 L431.9 372.2 L435.7 376.0 L429.7 378.7 Z" fill="#f41c1c" stroke="#000" stroke-width="0.8" stroke-linejoin="round" />
<path d="M431.9 372.2 L446.7 362.9 L450.0 367.8 L435.7 376.0 Z" fill="#c21212" stroke="#000" stroke-width="0.8" stroke-linejoin="round" />
<path d="M446.7 362.9 L448.0 353.5 L456.0 361.2 L450.0 367.8 Z" fill="#e83434" stroke="#000" stroke-width="0.8" stroke-linejoin="round" />
<path d="M390.3 381.5 L402.9 384.2 L405.6 402.3 L391.9 395.7 Z" fill="#7a1212" stroke="#000" stroke-width="0.8" stroke-linejoin="round" />
<path d="M402.9 384.2 L410.3 383.1 L416.0 405.0 L405.6 402.3 Z" fill="#981414" stroke="#000" stroke-width="0.8" stroke-linejoin="round" />
<path d="M410.3 383.1 L429.7 378.7 L434.6 401.7 L416.0 405.0 Z" fill="#960a0a" stroke="#000" stroke-width="0.8" stroke-linejoin="round" />
<path d="M429.7 378.7 L435.7 376.0 L442.3 398.5 L434.6 401.7 Z" fill="#a01010" stroke="#000" stroke-width="0.8" stroke-linejoin="round" />
<path d="M435.7 376.0 L450.0 367.8 L454.9 393.0 L442.3 398.5 Z" fill="#ae1212" stroke="#000" stroke-width="0.8" stroke-linejoin="round" />
<path d="M450.0 367.8 L456.0 361.2 L460.0 379.3 L454.9 393.0 Z" fill="#c02222" stroke="#000" stroke-width="0.8" stroke-linejoin="round" />
<path d="M391.9 395.7 L405.6 402.3 L407.2 413.8 L397.4 403.4 Z" fill="#701010" stroke="#000" stroke-width="0.8" stroke-linejoin="round" />
<path d="M405.6 402.3 L416.0 405.0 L421.5 416.5 L407.2 413.8 Z" fill="#821212" stroke="#000" stroke-width="0.8" stroke-linejoin="round" />
<path d="M416.0 405.0 L434.6 401.7 L436.3 414.1 L421.5 416.5 Z" fill="#7e0c0c" stroke="#000" stroke-width="0.8" stroke-linejoin="round" />
<path d="M434.6 401.7 L442.3 398.5 L445.0 410.5 L436.3 414.1 Z" fill="#8c1212" stroke="#000" stroke-width="0.8" stroke-linejoin="round" />
<path d="M442.3 398.5 L454.9 393.0 L453.2 405.0 L445.0 410.5 Z" fill="#9a1616" stroke="#000" stroke-width="0.8" stroke-linejoin="round" />
<path d="M454.9 393.0 L460.0 379.3 L457.6 395.7 L453.2 405.0 Z" fill="#b42424" stroke="#000" stroke-width="0.8" stroke-linejoin="round" />
<path d="M391.4 367.2 L412.2 353.5 L431.3 349.7 L446.7 352.5 L448.0 353.5 L446.7 362.9 L431.9 372.2 L427.5 373.3 L410.5 376.0 L402.9 377.1 L392.5 373.8 Z" fill="#d94f52" stroke="#000" stroke-width="0.9" stroke-linejoin="round" />
<path d="M446.7 352.5 L448.0 353.5 L456.0 361.2 L450.0 367.8 L446.7 362.9 Z" fill="#ee3a3a" stroke="#000" stroke-width="0.8" stroke-linejoin="round" />
<path d="M467.4 628.4 L473.4 631.5 L484.8 633.2 L496.2 629.0 L500.2 623.1" fill="none" stroke="#555" stroke-width="0.875" stroke-linejoin="round" />
<path d="M470.1 632.4 L480.1 634.8 L493.8 631.5 L493.8 642.9 L486.8 646.9 L480.1 647.6 L471.4 642.9 Z" fill="#6b4a35" stroke="#000" stroke-width="1.0" stroke-linejoin="round" />
<path d="M484.1 634.2 L493.8 631.5 L493.8 642.9 L486.8 646.9 L484.1 646.9 Z" fill="#8a6850" stroke="none" stroke-width="0" stroke-linejoin="round" />
<path d="M479.5 634.6 L479.5 647.3" fill="none" stroke="#1c120c" stroke-width="2.0" stroke-linejoin="round" />
<path d="M482.8 634.6 L482.8 647.3" fill="none" stroke="#2c1c14" stroke-width="1.0" stroke-linejoin="round" />
<path d="M465.4 633.2 L469.2 631.9 L469.7 646.9 L466.1 648.5 Z" fill="#1c1c1c" stroke="#000" stroke-width="1.0" stroke-linejoin="round" />
<path d="M462.7 649.8 L473.4 645.8 L475.1 656.9 L463.8 662.9 Z" fill="#383838" stroke="#000" stroke-width="1.0" stroke-linejoin="round" />
<path d="M463.3 653.6 L474.1 649.0" fill="none" stroke="#111" stroke-width="1.125" stroke-linejoin="round" />
<path d="M463.5 657.6 L474.5 652.8" fill="none" stroke="#111" stroke-width="1.125" stroke-linejoin="round" />
<path d="M488.4 644.5 L495.1 643.1 L496.5 646.2 L490.2 648.0 Z" fill="#c4c0b0" stroke="#222" stroke-width="0.6" stroke-linejoin="round" />
<path d="M487.5 647.6 L490.6 649.6 L497.8 652.2 L497.8 664.0 L501.8 662.7 L502.2 675.7 L494.2 681.7 L489.2 678.3 L489.2 668.3 L493.2 666.7 L493.2 654.9 L488.2 650.6 Z" fill="#1c1c1c" stroke="#000" stroke-width="1.0" stroke-linejoin="round" />
<path d="M495.5 653.3 L495.5 679.0" fill="none" stroke="#555" stroke-width="1.125" stroke-linejoin="round" />
</svg><!--/ROBOT-->
<!--UI-->
<!-- separators -->
<div class="vsep" style="left:372px;top:69px;height:79px"></div>
<div class="vsep" style="left:964px;top:69px;height:79px"></div>

<!-- purple highlight + button -->
<div class="abs" style="left:777px;top:62px;width:114px;height:86px;border:2px solid #5a06c8;background:#fcfcfc"></div>
<div class="abs" style="left:783px;top:69px;width:1px;height:78px;background:#c4c4c4"></div>
<div class="abs" style="left:889px;top:69px;width:1px;height:78px;background:#c4c4c4"></div>
<div class="abs" style="left:785px;top:69px;width:101px;height:76px;border:1px solid #ababab;background:#fff"></div>

<!-- tooltip -->
<div class="abs" style="left:824px;top:157px;width:145px;height:44px;border:1px solid #a6a6ac;background:#fff"></div>
<svg width="16" height="8" style="left:837px;top:151px"><path d="M1.2 6.8 L7.3 0.8 L13.4 6.8" fill="#fff" stroke="#9c9ca4" stroke-width="1.25"/><rect x="2.3" y="6.3" width="10" height="1.4" fill="#fff"/></svg>

<!-- search box -->
<div class="abs" style="left:868px;top:6px;width:201px;height:21px;border:1px solid #b9b9b9;background:#fff;border-radius:2px"></div>
<svg width="14" height="14" style="left:875px;top:10px"><rect width="14" height="14" fill="#1e1e1e"/><path d="M2.5 3.5 L6.5 6.5 L2.5 9.5" fill="none" stroke="#fff" stroke-width="1.3"/><path d="M7 11 H12" stroke="#fff" stroke-width="1.3"/></svg>
<svg width="16" height="16" style="left:1039px;top:10px"><circle cx="5.8" cy="5.8" r="4.3" fill="none" stroke="#8a8a8a" stroke-width="1.3"/><path d="M9 9 L13.5 13.5" stroke="#8a8a8a" stroke-width="1.8"/></svg>
<svg width="7" height="4" style="left:1060px;top:16px"><path d="M0.5 0 H6.5 L3.5 3.5 Z" fill="#7a7a7a"/></svg>
<!-- user / help / minimize -->
<svg width="22" height="22" style="left:1080px;top:7px"><circle cx="11" cy="11" r="8.8" fill="none" stroke="#3a3a3a" stroke-width="1.3"/><circle cx="11" cy="8.8" r="3.2" fill="none" stroke="#3a3a3a" stroke-width="1.2"/><path d="M4.8 17 C6 12.8 16 12.8 17.2 17" fill="none" stroke="#3a3a3a" stroke-width="1.2"/></svg>
<svg width="22" height="22" style="left:1116px;top:7px"><circle cx="11" cy="11" r="8.8" fill="none" stroke="#3a3a3a" stroke-width="1.3"/><path d="M8 8.6 C8 4.6 14.2 4.8 14 8.4 C13.9 10.6 11 10.6 11 13.2" fill="none" stroke="#2a2a2a" stroke-width="1.7"/><circle cx="11" cy="15.9" r="1.1" fill="#2a2a2a"/></svg>
<div class="abs" style="left:1158px;top:22px;width:12px;height:2px;background:#222"></div>

<!-- collapse icon -->
<svg width="13" height="14" style="left:1156px;top:158px"><rect x="0.5" y="0.5" width="11.5" height="12.5" fill="#fff" stroke="#a8a8a8"/><path d="M6.3 3.2 V10.2 L2.2 6.7 Z" fill="#8a8a8a"/><path d="M7.5 3 V10.5" stroke="#8a8a8a" stroke-width="0.8"/></svg>

<!-- cursor -->
<svg width="14" height="21" style="left:848px;top:121.5px"><path d="M0.6 0.8 L0.6 17 L4.2 13.6 L6.8 19.3 L9.6 18.1 L7 12.5 L11.8 12.3 Z" fill="#fff" stroke="#16161e" stroke-width="1.1" stroke-linejoin="round"/></svg>

<!-- dropdown arrows in ribbon -->
<svg width="7" height="4" style="left:991px;top:134.5px"><path d="M0.3 0 H6.3 L3.3 3.4 Z" fill="#3a3a3a"/></svg>
<svg width="7" height="4" style="left:1054px;top:134.5px"><path d="M0.3 0 H6.3 L3.3 3.4 Z" fill="#3a3a3a"/></svg>
<svg width="7" height="4" style="left:1113px;top:134.5px"><path d="M0.3 0 H6.3 L3.3 3.4 Z" fill="#3a3a3a"/></svg>

<!-- ===== quick access toolbar ===== -->
<!-- printer -->
<svg width="20" height="20" style="left:9px;top:8px">
<defs><linearGradient id="pb" x1="0" x2="0" y1="0" y2="1"><stop offset="0" stop-color="#1f7fb6"/><stop offset="0.45" stop-color="#8fd0ee"/><stop offset="0.55" stop-color="#0f4f7a"/><stop offset="0.8" stop-color="#0d5a8a"/><stop offset="1" stop-color="#5db4de"/></linearGradient>
<linearGradient id="pp" x1="0" x2="1" y1="0" y2="1"><stop offset="0" stop-color="#fff"/><stop offset="1" stop-color="#cfcfcf"/></linearGradient></defs>
<rect x="4.2" y="1.6" width="11.6" height="8" rx="0.8" fill="url(#pp)" stroke="#3c3c3c" stroke-width="1.1"/>
<rect x="1.3" y="7.6" width="17.4" height="8" rx="1.8" fill="url(#pb)" stroke="#14507a" stroke-width="0.9"/>
<rect x="3.4" y="12.2" width="13.2" height="2" fill="#0b3350"/>
<path d="M3.2 14.4 H16.8 L17.4 18.3 H2.6 Z" fill="#f4f4f4" stroke="#2c2c2c" stroke-width="1.1" stroke-linejoin="round"/>
<rect x="15.6" y="9.6" width="1.3" height="1.3" fill="#d8f0ff"/>
</svg>
<svg width="7" height="4" style="left:37px;top:15.5px"><path d="M0.3 0 H6.3 L3.3 3.4 Z" fill="#2e2e2e"/></svg>
<!-- undo (disabled) -->
<svg width="19" height="17" style="left:54px;top:10px"><path d="M1.2 1.2 L1.2 8.7 L8.7 8.7 L6.3 6.3 C8 5 10.5 4.6 12.2 6 C14 7.5 13.6 10.4 11.1 12.5 L13.8 14.9 C17.4 11.6 17.6 7.2 14.8 4 C12 0.8 7.6 0.6 4.3 3.9 Z" fill="#dcdcdc" stroke="#c0c0c0" stroke-width="0.9"/></svg>
<svg width="7" height="4" style="left:81px;top:15.5px"><path d="M0.3 0 H6.3 L3.3 3.4 Z" fill="#a8a8a8"/></svg>
<!-- redo (disabled) -->
<svg width="19" height="17" style="left:97px;top:10px"><g transform="translate(19,0) scale(-1,1)"><path d="M1.2 1.2 L1.2 8.7 L8.7 8.7 L6.3 6.3 C8 5 10.5 4.6 12.2 6 C14 7.5 13.6 10.4 11.1 12.5 L13.8 14.9 C17.4 11.6 17.6 7.2 14.8 4 C12 0.8 7.6 0.6 4.3 3.9 Z" fill="#dcdcdc" stroke="#c0c0c0" stroke-width="0.9"/></g></svg>
<svg width="7" height="4" style="left:125px;top:15.5px"><path d="M0.3 0 H6.3 L3.3 3.4 Z" fill="#a8a8a8"/></svg>
<!-- select button -->
<div class="abs" style="left:136px;top:3px;width:42px;height:28px;border:1px solid #8e8e8e;background:#fff"></div>
<div class="abs" style="left:137px;top:4px;width:29.5px;height:28px;background:#b4b4b4"></div>
<svg width="14" height="20" style="left:144.5px;top:7.5px"><path d="M0.8 0.9 L0.8 15.4 L4.2 12.4 L6.6 18 L9 17 L6.6 11.4 L11.6 11.2 Z" fill="#fff" stroke="#1a1a22" stroke-width="1.1" stroke-linejoin="round"/></svg>
<svg width="7" height="4" style="left:169.3px;top:15.5px"><path d="M0.3 0 H6.3 L3.3 3.4 Z" fill="#2e2e2e"/></svg>
<!-- traffic light -->
<svg width="12" height="20" style="left:189px;top:8px">
<defs><radialGradient id="tr" cx="0.4" cy="0.35" r="0.7"><stop offset="0" stop-color="#ff8a7a"/><stop offset="0.5" stop-color="#e82818"/><stop offset="1" stop-color="#8a0a00"/></radialGradient><radialGradient id="tg" cx="0.4" cy="0.35" r="0.7"><stop offset="0" stop-color="#9af08a"/><stop offset="0.5" stop-color="#2aa82a"/><stop offset="1" stop-color="#0a5a0a"/></radialGradient></defs>
<rect x="0.8" y="1" width="10.4" height="18" rx="5" fill="#161616"/><circle cx="6" cy="6" r="3" fill="url(#tr)"/><circle cx="6" cy="14" r="3" fill="url(#tg)"/></svg>
<!-- list / options -->
<svg width="18" height="20" style="left:216px;top:8px"><rect x="1.3" y="1.2" width="15.4" height="17.4" rx="0.8" fill="#fbfbfb" stroke="#2c2c2c" stroke-width="1.2"/>
<rect x="3.4" y="3.8" width="4" height="3" fill="#3a9fd0" stroke="#13527c" stroke-width="0.8"/><rect x="3.4" y="8.6" width="4" height="3" fill="#3a9fd0" stroke="#13527c" stroke-width="0.8"/><rect x="3.4" y="13.4" width="4" height="3" fill="#3a9fd0" stroke="#13527c" stroke-width="0.8"/>
<path d="M9.2 5 H14.6 M9.2 9.9 H14.6 M9.2 14.8 H14.6" stroke="#3a3a3a" stroke-width="1"/></svg>
<!-- gear -->
<svg width="20" height="20" style="left:245px;top:8px"><g transform="translate(9.8,9.7)" fill="#f3f3f3" stroke="#333" stroke-width="1.15" stroke-linejoin="round">
<path d="M-1.80 -5.83 L-1.37 -7.98 L1.37 -7.98 L1.80 -5.83 L2.85 -5.40 L4.68 -6.61 L6.61 -4.68 L5.40 -2.85 L5.83 -1.80 L7.98 -1.37 L7.98 1.37 L5.83 1.80 L5.40 2.85 L6.61 4.68 L4.68 6.61 L2.85 5.40 L1.80 5.83 L1.37 7.98 L-1.37 7.98 L-1.80 5.83 L-2.85 5.40 L-4.68 6.61 L-6.61 4.68 L-5.40 2.85 L-5.83 1.80 L-7.98 1.37 L-7.98 -1.37 L-5.83 -1.80 L-5.40 -2.85 L-6.61 -4.68 L-4.68 -6.61 L-2.85 -5.40 Z"/><circle r="2.9" fill="#f7f7f7"/></g></svg>
<svg width="7" height="4" style="left:273.2px;top:15.5px"><path d="M0.3 0 H6.3 L3.3 3.4 Z" fill="#2e2e2e"/></svg>

<!-- ===== ribbon icons ===== -->
<!-- ProjectManager -->
<svg width="17" height="17" style="left:28px;top:76px">
<path d="M0.6 5.4 V2.6 H2.6 V0.6 H6.6 V5.4 Z" fill="#fff" stroke="#222" stroke-width="1"/><rect x="4.6" y="0.4" width="2.2" height="2.2" fill="#2a7fb0"/>
<path d="M9.6 5.4 V2.6 H11.6 V0.6 H15.9 V5.4 Z" fill="#fff" stroke="#222" stroke-width="1"/><rect x="13.8" y="0.4" width="2.3" height="2.3" fill="#e8c820" stroke="#8a6a00" stroke-width="0.5"/>
<path d="M0.8 7.5 V15.6 M0.8 9.6 H2.6 M0.8 14.4 H2.6" stroke="#222" stroke-width="1" fill="none"/>
<path d="M4.2 10.4 V9 L6.2 7.4 L8.2 9 V10.4 Z" fill="#fff" stroke="#444" stroke-width="0.9"/>
<path d="M4.2 15.4 V14 L6.2 12.4 L8.2 14 V15.4 Z" fill="#fff" stroke="#444" stroke-width="0.9"/>
<path d="M9 13.6 C11.6 13.4 13 12 14.2 9.8" fill="none" stroke="#1d74a8" stroke-width="1.8"/><path d="M11.2 7.2 H16 V12 Z" fill="#1d74a8"/>
</svg>
<!-- SmartBom -->
<svg width="17" height="17" style="left:105px;top:75.5px">
<rect x="0.7" y="0.8" width="13.6" height="3" rx="0.8" fill="#1c6a9c" stroke="#0e3e60" stroke-width="0.8"/>
<rect x="0.7" y="3.8" width="13.6" height="11.2" fill="#ededed" stroke="#444" stroke-width="1"/>
<path d="M0.7 6.4 H14.3 M0.7 9 H14.3 M5.2 3.8 V9 M9.8 3.8 V9" stroke="#666" stroke-width="0.8"/>
<path d="M1.2 14.6 L6 9.6 L10.5 14.6" fill="#d8d8d8" stroke="#666" stroke-width="0.8"/>
<path d="M9.4 8.4 L13 6.8 L16.4 8.4 V12.6 L13 15.8 L9.4 12.6 Z" fill="#b8b8b8" stroke="#555" stroke-width="0.8"/>
<path d="M10.6 8.2 L13.2 7 L15.8 8.2 V11 L13.2 12.2 L10.6 11 Z" fill="#2f8ec4" stroke="#15507a" stroke-width="0.6"/>
</svg>
<!-- PilotAssembly -->
<svg width="17" height="17" style="left:148px;top:73.5px">
<path d="M0.8 6.6 L6.4 1.6 L15.4 1 L15.6 10.6 L10.2 15.6 L0.8 15.4 Z" fill="#f2f2f2" stroke="#555" stroke-width="0.9"/>
<path d="M0.8 6.8 H10.2 L15.5 3.4 V5.8 L10.2 9.2 H0.8 Z" fill="#1c6a9c" stroke="#0e3e60" stroke-width="0.6"/>
<path d="M7.8 2.6 L11.2 1.2 L15.2 1.6 V6.4 L11.6 8 L7.8 7.4 Z" fill="#3f9dce" stroke="#15507a" stroke-width="0.7"/>
<path d="M7.8 2.6 L11.6 3.2 L15.2 1.6 M11.6 3.2 V8" stroke="#15507a" stroke-width="0.6" fill="none"/>
<circle cx="5.2" cy="12.4" r="2.9" fill="#1a1a1a"/><circle cx="5.2" cy="12.4" r="1.1" fill="#f2f2f2"/>
<path d="M5.2 8.8 V16 M1.6 12.4 H8.8 M2.7 9.9 L7.7 14.9 M7.7 9.9 L2.7 14.9" stroke="#1a1a1a" stroke-width="1.1"/><circle cx="5.2" cy="12.4" r="1.1" fill="#f2f2f2"/>
<path d="M10.2 9.2 V15.6" stroke="#555" stroke-width="0.7"/>
</svg>
<!-- AssemblyBoard (disabled) -->
<svg width="15" height="17" style="left:149px;top:100px"><rect x="0.5" y="0.5" width="13.6" height="15.2" fill="#ececec" stroke="#c6c6c6"/>
<g fill="#c2c2c2"><rect x="2.4" y="5.4" width="1.6" height="1.6"/><rect x="6.4" y="5.4" width="1.6" height="1.6"/><rect x="10.4" y="5.4" width="1.6" height="1.6"/><rect x="2.4" y="8.6" width="1.6" height="1.6"/><rect x="6.4" y="8.6" width="1.6" height="1.6"/><rect x="10.4" y="8.6" width="1.6" height="1.6"/><rect x="2.4" y="11.8" width="1.6" height="1.6"/><rect x="6.4" y="11.8" width="1.6" height="1.6"/><rect x="10.4" y="11.8" width="1.6" height="1.6"/><rect x="2.6" y="2.6" width="4" height="1.4"/></g></svg>
<!-- EasyPrint -->
<svg width="17" height="17" style="left:147.5px;top:125.5px">
<rect x="1" y="4.6" width="15" height="9" rx="2.6" fill="#fdfdfd" stroke="#1e1e1e" stroke-width="1.3"/>
<rect x="4.4" y="0.9" width="8.2" height="5" fill="#fff" stroke="#1e1e1e" stroke-width="1.2"/>
<rect x="3.6" y="5.6" width="9.8" height="3.4" fill="#8fd3ea" stroke="#1e4e6a" stroke-width="0.8"/>
<path d="M2.4 10.2 H14.6" stroke="#1e1e1e" stroke-width="1.2"/>
<rect x="4.4" y="10.8" width="8.2" height="5.2" fill="#fff" stroke="#1e1e1e" stroke-width="1.2"/>
</svg>
<!-- DriveAssembly -->
<svg width="18" height="17" style="left:263.5px;top:73.5px">
<rect x="0.8" y="13.6" width="9.4" height="2.2" fill="#f4f4f4" stroke="#222" stroke-width="1"/>
<path d="M2.4 13.4 L3.4 9.2 H7.4 L8.2 13.4 Z" fill="#d8d8d8" stroke="#444" stroke-width="0.9"/><rect x="4.4" y="10.4" width="1.8" height="1.8" fill="#444"/>
<path d="M4.4 9.2 L6 2.4 A2 2 0 0 1 9.6 1.6 L14.8 7.8 L13 9 L8.6 4.4 L7.4 9.2 Z" fill="#e4e4e4" stroke="#444" stroke-width="0.9" stroke-linejoin="round"/>
<circle cx="7.8" cy="2.8" r="0.9" fill="#444"/>
<rect x="11" y="8" width="5.4" height="5" rx="1.2" fill="#3f8fbc" stroke="#1e3e50" stroke-width="1"/>
</svg>
<!-- Tolerances -->
<svg width="18" height="15" style="left:263.5px;top:99.5px">
<rect x="0.6" y="5.4" width="1.9" height="8.8" fill="#1d74a8"/><rect x="14.6" y="5.4" width="1.9" height="8.8" fill="#1d74a8"/>
<path d="M5.6 3.2 H11.6 M8.6 0.4 V6" stroke="#222" stroke-width="1.7"/>
<path d="M5.6 12.2 H11.6" stroke="#222" stroke-width="1.7"/>
<path d="M2.8 8.4 L6 6 V7.6 H7.4 V9.2 H6 V10.8 Z M14.4 8.4 L11.2 6 V7.6 H9.8 V9.2 H11.2 V10.8 Z" fill="#333"/>
</svg>
<!-- Integration -->
<svg width="17" height="17" style="left:399.5px;top:76px">
<g stroke="#222" stroke-width="0.9" stroke-linejoin="round">
<path d="M0.8 2.8 L4.4 1 L8 2.8 V6.8 L4.4 8.8 L0.8 6.8 Z" fill="#cfcfcf"/><path d="M0.8 2.8 L4.4 4.6 L8 2.8 M4.4 4.6 V8.8" fill="none"/>
<path d="M8 2.8 L11.6 1 L15.2 2.8 V6.8 L11.6 8.8 L8 6.8 Z" fill="#cfcfcf"/><path d="M8 2.8 L11.6 4.6 L15.2 2.8 M11.6 4.6 V8.8" fill="none"/>
<path d="M4 9.2 L8 7.2 L12 9.2 V13.4 L8 15.6 L4 13.4 Z" fill="#4aa6d6"/><path d="M4 9.2 L8 11.2 L12 9.2 M8 11.2 V15.6" fill="none"/>
</g></svg>
<!-- BatchConverter -->
<svg width="18" height="18" style="left:477px;top:75px">
<defs><radialGradient id="bcg" cx="0.4" cy="0.3" r="0.8"><stop offset="0" stop-color="#bdbdbd"/><stop offset="1" stop-color="#6a6a6a"/></radialGradient></defs>
<circle cx="9.2" cy="8.9" r="7.9" fill="url(#bcg)" stroke="#4a4a4a" stroke-width="0.9"/>
<path d="M3 10 C2.6 5.4 6.4 3.4 10.4 4.6 L11 2.6 L15.4 6.4 L10 8.6 L10.2 6.8 C7.4 6.4 5.2 8 5.6 11.4 C6 13.6 8 15 11 15.2 C6.6 16.6 3.4 13.8 3 10 Z" fill="#4aa6d6" stroke="#2a6a90" stroke-width="0.5"/>
</svg>
<!-- BatchProperties -->
<svg width="18" height="17" style="left:534.5px;top:73.5px">
<rect x="0.8" y="0.8" width="14.4" height="12.4" rx="0.8" fill="#fdfdfd" stroke="#2a2a2a" stroke-width="1.1"/>
<rect x="2.6" y="2.8" width="4" height="3" fill="#2f8ec4" stroke="#15507a" stroke-width="0.7"/><rect x="2.6" y="7.2" width="2.6" height="3.6" fill="#2f8ec4" stroke="#15507a" stroke-width="0.7"/>
<path d="M8.4 3.4 H13.2" stroke="#444" stroke-width="0.9"/>
<path d="M4.4 15.8 L5.4 8.4 H9 L10 9.6 H14.6 V11" fill="#e2e2e2" stroke="#2a2a2a" stroke-width="0.9" stroke-linejoin="round"/>
<path d="M4.4 15.8 L7 11 H16.6 L14.2 15.8 Z" fill="#fafafa" stroke="#2a2a2a" stroke-width="0.9" stroke-linejoin="round"/>
</svg>
<!-- DataRecovery -->
<svg width="22" height="21" style="left:532.5px;top:97.5px">
<defs><linearGradient id="dbg" x1="0" x2="1"><stop offset="0" stop-color="#9a9a9a"/><stop offset="0.5" stop-color="#e8e8e8"/><stop offset="1" stop-color="#8a8a8a"/></linearGradient></defs>
<path d="M0.6 2.8 V10.4 C0.6 12.8 11.6 12.8 11.6 10.4 V2.8" fill="url(#dbg)" stroke="#333" stroke-width="0.9"/>
<path d="M0.6 5.4 C0.6 7.6 11.6 7.6 11.6 5.4 M0.6 8 C0.6 10.2 11.6 10.2 11.6 8" fill="none" stroke="#333" stroke-width="0.9"/>
<ellipse cx="6.1" cy="2.8" rx="5.5" ry="2" fill="#d0d0d0" stroke="#333" stroke-width="0.9"/>
<path d="M12.4 2.4 C16.8 2.6 19.4 5.6 19 9.6" fill="none" stroke="#111" stroke-width="1.4"/><path d="M11.4 0.6 L16.4 1 L14 5 Z" fill="#111"/>
<path d="M2 11.6 C2.4 14.6 4.2 16.6 7 17.6" fill="none" stroke="#111" stroke-width="1.4"/><path d="M3.6 19.8 L9.6 19.2 L6 14.6 Z" fill="#111"/>
<rect x="11.2" y="10" width="9.4" height="9.8" fill="#1f7a44" stroke="#0e4a26" stroke-width="0.6"/>
<path d="M13.6 12.2 L18.2 17.6 M18.2 12.2 L13.6 17.6" stroke="#fff" stroke-width="1.5"/>
</svg>
<!-- DrawingTranslate (disabled) -->
<svg width="18" height="17" style="left:534.5px;top:125.5px">
<circle cx="9.4" cy="7.6" r="7" fill="#ececec" stroke="#cdcdcd" stroke-width="1"/>
<rect x="1" y="5.6" width="11.6" height="9.6" rx="0.8" fill="#f4f4f4" stroke="#c4c4c4" stroke-width="1.1"/>
<rect x="3" y="7.6" width="2.8" height="1.8" fill="none" stroke="#c4c4c4" stroke-width="0.9"/><rect x="7.4" y="7.6" width="2.8" height="1.8" fill="none" stroke="#c4c4c4" stroke-width="0.9"/><path d="M3 13.2 H6.2 M8 12 H12.4" stroke="#c4c4c4" stroke-width="1"/>
</svg>
<!-- SmartDrawings -->
<svg width="18" height="17" style="left:661.5px;top:73.5px">
<rect x="0.6" y="1.6" width="9.6" height="10" fill="#b4b4b4"/><rect x="2.6" y="3.2" width="9.6" height="10" fill="#8e8e8e"/>
<rect x="4.8" y="5" width="11.4" height="10.6" fill="#fcfcfc" stroke="#2a2a2a" stroke-width="1.1"/>
<path d="M8.6 5.2 L14.4 0.4 L16.8 0.6 L14.4 2.8 L16.6 3 L13 5.4 Z" fill="#2a2a2a"/>
<rect x="6.6" y="7" width="3.2" height="2.2" fill="#2f8ec4" stroke="#0e3e60" stroke-width="0.7"/><rect x="11.6" y="7" width="2.8" height="2.2" fill="#2f8ec4" stroke="#0e3e60" stroke-width="0.7"/>
<path d="M6.8 13.4 V12 H7.8 V10.8 H9.8 V12 H10.8 V13.4 Z" fill="#2f8ec4" stroke="#0e3e60" stroke-width="0.7"/>
<rect x="12.4" y="11.6" width="3" height="3" fill="#d0d0d0" stroke="#666" stroke-width="0.6"/>
</svg>
<!-- PowerPrint -->
<svg width="18" height="17" style="left:661.5px;top:99.5px">
<rect x="0.6" y="0.8" width="9.6" height="10.4" fill="#c4c4c4"/><rect x="2.6" y="2.4" width="9.6" height="10.4" fill="#9c9c9c"/>
<rect x="4.8" y="6.2" width="11.4" height="7" rx="1.6" fill="#f6f6f6" stroke="#333" stroke-width="1.1"/>
<rect x="7" y="4.2" width="7" height="3" fill="#fff" stroke="#333" stroke-width="0.9"/>
<rect x="6.6" y="7" width="7.8" height="2.6" fill="#8fd3ea" stroke="#1e4e6a" stroke-width="0.7"/>
<rect x="7.2" y="11" width="6.6" height="4.4" fill="#fff" stroke="#333" stroke-width="0.9"/>
</svg>
<!-- 3DSpaceExplorer -->
<svg width="18" height="16" style="left:661.5px;top:126.5px">
<defs><linearGradient id="fg3" x1="0" x2="1" y1="0" y2="1"><stop offset="0" stop-color="#2f8fb8"/><stop offset="1" stop-color="#5ab6d8"/></linearGradient></defs>
<path d="M0.8 14.2 V1 H5.4 L6.6 2.4 H15.8 V14.2 Z" fill="url(#fg3)" stroke="#1e3a48" stroke-width="1.2" stroke-linejoin="round"/>
<path d="M0.8 3.6 H15.8" stroke="#1e3a48" stroke-width="0.8"/>
<circle cx="8.4" cy="8.8" r="3.6" fill="none" stroke="#c8c8c8" stroke-width="1.6"/><path d="M8.4 6.6 L10.6 8.6 L8.4 10.8" fill="none" stroke="#1d5a80" stroke-width="1"/>
</svg>
<!-- Spare Parts -->
<svg width="20" height="17" style="left:826.5px;top:74.5px">
<rect x="0.6" y="0.6" width="18.6" height="15.6" fill="#f2f2f2" stroke="#333" stroke-width="1.1"/>
<defs><linearGradient id="sph" x1="0" x2="0" y1="0" y2="1"><stop offset="0" stop-color="#2f8fb8"/><stop offset="1" stop-color="#7cc6e4"/></linearGradient></defs>
<rect x="1.1" y="1.1" width="17.6" height="3.6" fill="url(#sph)"/><path d="M0.6 4.8 H19.2" stroke="#333" stroke-width="0.8"/>
<path d="M12.6 4.8 V16 M0.8 10.6 H19 M0.8 13.6 H19" stroke="#c0c0c0" stroke-width="0.7"/>
<path d="M3 15 H8.4 V13.8 H6.6 L5.8 10.2 L7.4 8.4 L10.6 8.8 V7.4 L7 6.6 L4.2 8 L3.4 9.4 L4.8 10.4 L4.8 13.8 H3 Z" fill="#1a1a1a"/>
<path d="M9.4 6.2 H11.6 V9.6 H9.4" fill="none" stroke="#1a1a1a" stroke-width="0.9"/>
<path d="M13.6 11 L16.4 8.8 V10.2 H18.4 V11.8 H16.4 V13.2 Z" fill="#2f8ec4"/>
</svg>
<!-- myCAD -->
<svg width="18" height="18" style="left:918px;top:75px">
<defs><linearGradient id="myg" x1="0" x2="0" y1="0" y2="1"><stop offset="0" stop-color="#f8f8f8"/><stop offset="1" stop-color="#b0b0b0"/></linearGradient></defs>
<circle cx="9" cy="8.8" r="7.6" fill="url(#myg)" stroke="#2e2e2e" stroke-width="1.1"/>
<text x="9.2" y="11.4" text-anchor="middle" font-family="Liberation Sans" font-style="italic" font-weight="bold" font-size="9.2" fill="#1c5f96" stroke="#1c5f96" stroke-width="0.3">my</text>
</svg>
<!-- Outils de reference -->
<svg width="22" height="19" style="left:984.5px;top:74.5px">
<defs><linearGradient id="fgr" x1="0" x2="1"><stop offset="0" stop-color="#8c8c8c"/><stop offset="1" stop-color="#c8c8c8"/></linearGradient></defs>
<path d="M0.6 17 V0.8 H5.6 L7 2.8 H14.6 V17 Z" fill="url(#fgr)" stroke="#4a4a4a" stroke-width="0.9" stroke-linejoin="round"/>
<path d="M0.8 17 L4.8 5 H16 L13 17 Z" fill="#b0b0b0" stroke="#4a4a4a" stroke-width="0.8" stroke-linejoin="round"/>
<path d="M6.8 7.8 V15.2 C6.8 18 20.4 18 20.4 15.2 V7.8" fill="url(#dbg)" stroke="#444" stroke-width="0.9"/>
<path d="M6.8 10.4 C6.8 13 20.4 13 20.4 10.4 M6.8 13 C6.8 15.6 20.4 15.6 20.4 13" fill="none" stroke="#444" stroke-width="0.9"/>
<ellipse cx="13.6" cy="7.8" rx="6.8" ry="2.4" fill="#dadada" stroke="#444" stroke-width="0.9"/>
</svg>
<!-- Outils de conception -->
<svg width="20" height="19" style="left:1048.5px;top:74.5px">
<path d="M6.4 2.4 L12 0.6 L18.4 2.8 V15.4 L13 17.8 L6.4 15 Z" fill="#fafafa" stroke="#3a3a3a" stroke-width="1" stroke-linejoin="round"/>
<path d="M12 0.8 V3.4 M13 4.4 V17.6 M13 4.4 L18.4 2.8" stroke="#3a3a3a" stroke-width="0.8" fill="none"/>
<path d="M14.8 4.6 V16 " stroke="#9a9a9a" stroke-width="1.4"/>
<path d="M0.8 7.6 L6.4 5.2 L12 7.2 V14.4 L6 17.2 L0.8 14.2 Z" fill="#4aa6d6" stroke="#15507a" stroke-width="0.9" stroke-linejoin="round"/>
<path d="M0.8 7.6 L6.2 9.8 L12 7.2 M6.2 9.8 V17" stroke="#15507a" stroke-width="0.8" fill="none"/>
<path d="M1 7.8 L6.2 10 V17 L1 14.2 Z" fill="#2f86b6"/>
</svg>
<!-- Outils de mise en plan -->
<svg width="21" height="18" style="left:1105.5px;top:74.5px">
<rect x="0.8" y="0.8" width="19" height="16.2" fill="#fdfdfd" stroke="#2a2a2a" stroke-width="1.3"/>
<rect x="2.8" y="3" width="6.4" height="3.4" fill="#2f8ec4" stroke="#15507a" stroke-width="0.7"/><rect x="11.2" y="3" width="6" height="3.4" fill="#2f8ec4" stroke="#15507a" stroke-width="0.7"/>
<path d="M2.8 14.4 V11.6 H4.8 V9 H8.4 V11.6 H10.4 V14.4 Z" fill="#2f8ec4" stroke="#15507a" stroke-width="0.7"/>
<rect x="12.4" y="9.8" width="6.4" height="6.2" fill="#c8c8c8" stroke="#555" stroke-width="0.7"/><rect x="12.4" y="9.8" width="6.4" height="2.4" fill="#f0f0f0" stroke="#555" stroke-width="0.7"/>
</svg>

<!-- ===== heads-up view toolbar ===== -->
<svg width="330" height="30" style="left:280px;top:150px">
<defs>
<radialGradient id="lens" cx="0.4" cy="0.35" r="0.8"><stop offset="0" stop-color="#ffffff"/><stop offset="1" stop-color="#d4d8dc"/></radialGradient>
<linearGradient id="hbl" x1="0" x2="1"><stop offset="0" stop-color="#8cc4e2"/><stop offset="1" stop-color="#bfe0f0"/></linearGradient>
<linearGradient id="selb" x1="0" x2="0" y1="0" y2="1"><stop offset="0" stop-color="#fefefe"/><stop offset="1" stop-color="#e2e2e2"/></linearGradient>
<linearGradient id="mon" x1="0" x2="1" y1="0" y2="1"><stop offset="0" stop-color="#f4f4f4"/><stop offset="1" stop-color="#c4c4c4"/></linearGradient>
<clipPath id="cb1"><circle cx="235.4" cy="12.2" r="7.4"/></clipPath><clipPath id="cb2"><circle cx="262.3" cy="12" r="7.4"/></clipPath>
</defs>
<!-- zoom to fit -->
<path d="M11.6 16 L5 22.4" stroke="#4a94c0" stroke-width="2.8" stroke-linecap="round"/><path d="M11.2 15.6 L5 21.8" stroke="#9fd0ea" stroke-width="1" stroke-linecap="round"/>
<circle cx="15.5" cy="11.8" r="6" fill="url(#lens)" stroke="#8a8e92" stroke-width="1.1"/>
<path d="M15.5 7.8 L14 9.6 H17 Z M15.5 15.8 L14 14 H17 Z M11.5 11.8 L13.3 10.3 V13.3 Z M19.5 11.8 L17.7 10.3 V13.3 Z" fill="#555"/>
<!-- zoom area -->
<path d="M34 6.4 H47.6 V18.4 H45" fill="none" stroke="#555" stroke-width="1" stroke-dasharray="2.2 1.4"/>
<path d="M36 18 L30 24" stroke="#4a94c0" stroke-width="2.8" stroke-linecap="round"/><path d="M35.6 17.6 L30 23.2" stroke="#9fd0ea" stroke-width="1" stroke-linecap="round"/>
<circle cx="39.8" cy="13.8" r="6" fill="url(#lens)" stroke="#8a8e92" stroke-width="1.1"/>
<!-- previous view -->
<path d="M57.4 17.4 L70.4 6.4 L73.2 7 L74 9.6 L62 22.6 Z" fill="#dcdcdc" stroke="#7a7a7a" stroke-width="0.9" stroke-linejoin="round"/>
<path d="M68 8.6 L71.6 12.2" stroke="#8a8a8a" stroke-width="0.8"/>
<ellipse cx="59.8" cy="20" rx="3.4" ry="2.2" transform="rotate(42 59.8 20)" fill="#f4f4f4" stroke="#7a7a7a" stroke-width="0.9"/>
<path d="M64.4 19.4 L68.6 16.4 V18.2 H74 V20.6 H68.6 V22.4 Z" fill="#2f86b6"/>
<!-- section view -->
<path d="M82.6 11 C82.6 6 100.6 6 100.6 11 V20 C100.6 24 94 23 94 20 V12.4 C94 10.2 89.2 10.2 89.2 12.4 V20.4 C89.2 24.4 82.6 24 82.6 20.4 Z" fill="#d8d8d8" stroke="#666" stroke-width="0.9"/>
<path d="M82.6 11.6 C82.6 15.4 89.2 14.6 89.2 12.4 V20.6 C89.2 24 82.6 24 82.6 20.6 Z" fill="#7fc0e0" stroke="#2a6a90" stroke-width="0.8"/>
<path d="M94 12.4 C94 14.6 100.6 15.2 100.6 11.4 V20.2 C100.6 23.6 94 23.4 94 20.2 Z" fill="#7fc0e0" stroke="#2a6a90" stroke-width="0.8"/>
<path d="M83.4 17 L88.4 13.6 M83.4 20.6 L88.6 17 M84.6 22.8 L88.8 20 M94.6 17 L99.8 13.6 M94.6 20.6 L100 17 M95.8 22.6 L100 19.8" stroke="#2a6a90" stroke-width="0.7"/>
<!-- view orientation -->
<path d="M108.4 12 L114.4 6.2 H126 V18 L121 23.4" fill="#fff" stroke="#555" stroke-width="0.9"/>
<path d="M121 12 L126 6.2 M114.4 6.2 V12 M120 7 V11 M122 15 H125.4" stroke="#555" stroke-width="0.8" fill="none"/>
<path d="M120 7 l-1.1 1.6 h2.2 z M120 11 l-1.1 -1.6 h2.2 z M122 15 l1.6 -1.1 v2.2 z M125.6 15 l-1.6 -1.1 v2.2 z" fill="#333"/>
<rect x="108.4" y="12" width="12.6" height="11.4" fill="url(#hbl)" stroke="#3a7a9e" stroke-width="0.9"/>
<path d="M133.5 13.6 H139.5 L136.5 17 Z" fill="#9a9a9a"/>
<!-- display style cube -->
<path d="M149 8.8 L158 5.4 L166.2 8 V20 L157 23.8 L149 20.6 Z" fill="#fff" stroke="#8a8a8a" stroke-width="0.9" stroke-linejoin="round"/>
<path d="M149 8.8 L157 11.2 L157 23.8 L149 20.6 Z" fill="#7fbfe0"/><path d="M157 11.2 L161 9.8 V22.2 L157 23.8 Z" fill="#a8d6ee"/><path d="M161 9.8 L166.2 8 V20 L161 22.2 Z" fill="#f0f0f0"/>
<path d="M149 8.8 L158 5.4 L166.2 8 L157 11.2 Z" fill="#e4f2fa" stroke="#8a8a8a" stroke-width="0.7"/>
<path d="M157 11.2 V23.8" stroke="#5a9abc" stroke-width="0.8"/>
<path d="M173.5 13.6 H179.5 L176.5 17 Z" fill="#9a9a9a"/>
<!-- hide/show selected -->
<rect x="184.5" y="2.5" width="39" height="25" fill="url(#selb)" stroke="#9a9a9a"/>
<rect x="185" y="3" width="25.4" height="24" fill="#c6c6c6"/><path d="M210.5 3 V27" stroke="#b0b0b0" stroke-width="0.8"/>
<path d="M188.4 15.6 C192 8.6 202.6 8.6 206 15.6 C202.6 22 192 22 188.4 15.6 Z" fill="#f2f2f2" stroke="#333" stroke-width="1.1"/>
<circle cx="197.2" cy="15.2" r="3.6" fill="#1a1a1a"/><circle cx="198.6" cy="14" r="1.3" fill="#777"/>
<path d="M197.4 7 V23.4" stroke="#111" stroke-width="1.1"/>
<path d="M213.5 13.6 H219.5 L216.5 17 Z" fill="#4a4a4a"/>
<!-- edit appearance -->
<g clip-path="url(#cb1)"><rect x="227" y="4" width="9" height="9" fill="#4a7fd0"/><rect x="235.4" y="4" width="9" height="9" fill="#e05048"/><rect x="227" y="12.6" width="9" height="9" fill="#4ab04a"/><rect x="235.4" y="12.6" width="9" height="9" fill="#e8c43a"/>
<path d="M235.4 4 C231 8 231 16 235.4 20" fill="none" stroke="#fff" stroke-width="0.6" opacity="0.6"/><ellipse cx="233" cy="8" rx="4" ry="2.6" fill="#fff" opacity="0.35"/></g>
<circle cx="235.4" cy="12.2" r="7.4" fill="none" stroke="#8a8a8a" stroke-width="0.5"/>
<path d="M246 12.4 L243.6 10 L234.8 19.6 L233.8 24.6 L238 22.6 Z" fill="#f0c838" stroke="#6a5a2a" stroke-width="0.8" stroke-linejoin="round"/>
<path d="M246 12.4 L243.6 10 L242 11.6 L244.6 14 Z" fill="#d86a6a" stroke="#6a5a2a" stroke-width="0.6"/><path d="M233.8 24.6 L234.4 21.6 L236.4 23.4 Z" fill="#333"/>
<!-- apply scene -->
<path d="M252.6 17.6 H272.4 V25.4 H252.6 Z" fill="#2e2e2e"/>
<path d="M255 19 h3.6 v2.6 h-3.6 z M262.2 19 h3.6 v2.6 h-3.6 z M269.4 19 h2.6 v2.6 h-2.6 z M258.6 22.2 h3.6 v2.6 h-3.6 z M265.8 22.2 h3.6 v2.6 h-3.6 z M252.8 22.2 h2.2 v2.6 h-2.2 z" fill="#e8e8e8"/>
<g clip-path="url(#cb2)"><rect x="254" y="4" width="8.4" height="9" fill="#4a7fd0"/><rect x="262.3" y="4" width="9" height="9" fill="#e05048"/><rect x="254" y="12.4" width="8.4" height="9" fill="#4ab04a"/><rect x="262.3" y="12.4" width="9" height="9" fill="#e8c43a"/><ellipse cx="260" cy="8" rx="4" ry="2.6" fill="#fff" opacity="0.35"/></g>
<circle cx="262.3" cy="12" r="7.4" fill="none" stroke="#8a8a8a" stroke-width="0.5"/>
<path d="M279.3 13.6 H285.3 L282.3 17 Z" fill="#9a9a9a"/>
<!-- view settings monitor -->
<rect x="294.4" y="7.2" width="17.4" height="11.6" fill="url(#mon)" stroke="#5a5a5a" stroke-width="1.2"/>
<path d="M303 19 V22.4 M298.6 22.8 H307.6" stroke="#4a4a4a" stroke-width="1.5"/>
<path d="M319.3 13.6 H325.3 L322.3 17 Z" fill="#9a9a9a"/>
</svg>
<!--/UI-->
<!--TEXT--><span class="t" style="left:495.6px;top:10.6px;letter-spacing:-0.070px;">Abfan_Robot-finished.SLDASM</span>
<span class="t" style="left:-3.6px;top:94.0px;letter-spacing:-0.013px;">ProjectManager</span>
<span class="t" style="left:86.9px;top:94.0px;letter-spacing:-0.254px;">SmartBom</span>
<span class="t" style="left:171.8px;top:75.0px;letter-spacing:-0.132px;">PilotAssembly</span>
<span class="t" style="left:171.8px;top:101.0px;letter-spacing:-0.173px;color:#b4b4b4;-webkit-text-stroke:0.1px #b4b4b4">AssemblyBoard</span>
<span class="t" style="left:171.8px;top:127.0px;letter-spacing:-0.347px;">EasyPrint</span>
<span class="t" style="left:287.5px;top:75.0px;letter-spacing:-0.222px;">DriveAssembly</span>
<span class="t" style="left:287.5px;top:101.0px;letter-spacing:-0.233px;">Tolerances</span>
<span class="t" style="left:378.8px;top:94.0px;letter-spacing:0.331px;">Integration</span>
<span class="t" style="left:447.0px;top:94.0px;letter-spacing:-0.058px;">BatchConverter</span>
<span class="t" style="left:559.0px;top:75.0px;letter-spacing:-0.062px;">BatchProperties</span>
<span class="t" style="left:559.0px;top:101.0px;letter-spacing:-0.306px;">DataRecovery</span>
<span class="t" style="left:559.0px;top:127.0px;letter-spacing:-0.044px;color:#b4b4b4;-webkit-text-stroke:0.1px #b4b4b4">DrawingTranslate</span>
<span class="t" style="left:685.5px;top:75.0px;letter-spacing:-0.016px;">SmartDrawings</span>
<span class="t" style="left:685.5px;top:101.0px;letter-spacing:0.025px;">PowerPrint</span>
<span class="t" style="left:685.5px;top:127.0px;letter-spacing:-0.236px;">3DSpaceExplorer</span>
<span class="t" style="left:789.7px;top:94.0px;letter-spacing:-0.192px;">Spare Parts Export</span>
<span class="t" style="left:896.4px;top:94.0px;letter-spacing:-0.221px;">myCADtools</span>
<span class="t" style="left:970.6px;top:94.0px;letter-spacing:0.190px;">Outils de</span>
<span class="t" style="left:970.6px;top:106.7px;letter-spacing:-0.022px;">référence</span>
<span class="t" style="left:1033.6px;top:94.0px;letter-spacing:0.190px;">Outils de</span>
<span class="t" style="left:1029.3px;top:106.7px;letter-spacing:0.217px;">conception</span>
<span class="t" style="left:1100.8px;top:94.0px;letter-spacing:0.282px;">Outils</span>
<span class="t" style="left:1098.0px;top:106.7px;letter-spacing:-0.127px;">de mi...</span>
<span class="t" style="left:894.6px;top:10.7px;letter-spacing:-0.276px;color:#555;-webkit-text-stroke:0.1px #555">Search Commands</span>
<span class="t" style="left:831.7px;top:162.9px;letter-spacing:-0.014px;font-weight:bold">Spare Parts Export</span>
<span class="t" style="left:831.7px;top:180.5px;letter-spacing:-0.173px;">Exporter vers Spare Parts.</span><!--/TEXT-->
</body></html>
